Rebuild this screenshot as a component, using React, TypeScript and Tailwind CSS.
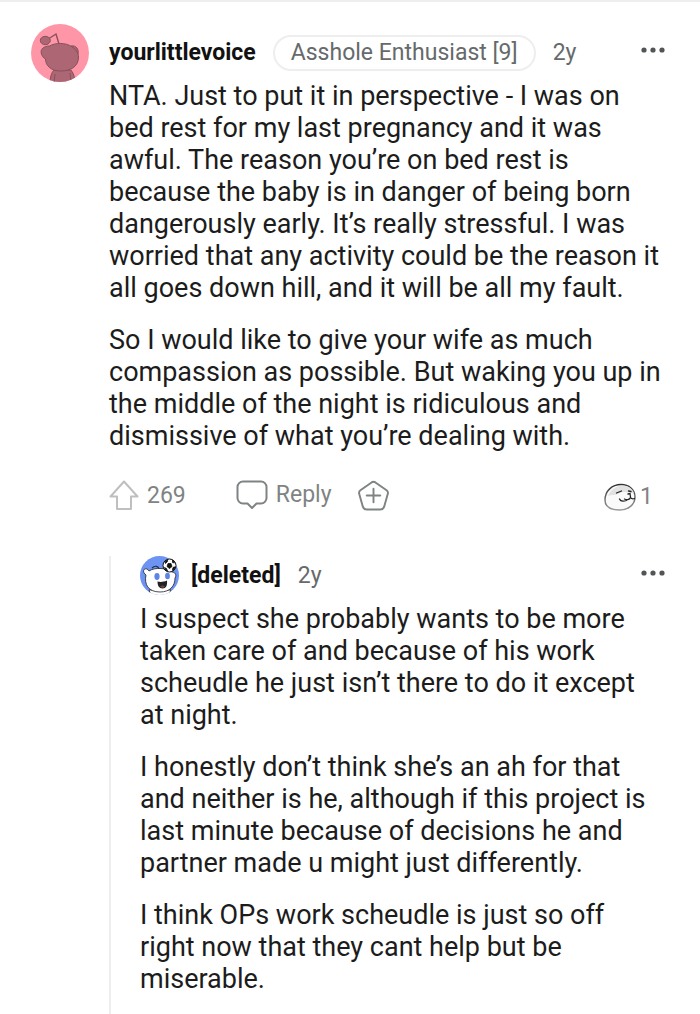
import type { ReactNode } from 'react';

interface CommentHeaderProps {
  avatar: ReactNode;
  author: string;
  flair?: string;
  age: string;
}

function PinkAvatar() {
  return (
    <svg viewBox="0 0 58 58" className="w-full h-full" aria-hidden="true">
      <clipPath id="pink-clip">
        <circle cx="29" cy="29" r="29" />
      </clipPath>
      <g clipPath="url(#pink-clip)">
        <rect width="58" height="58" fill="#ff96a8" />
        <g fill="#ad6673" stroke="#87505c" strokeWidth="1">
          <path d="M19 60c0-6 1-11 4-14h17c3 4 4 8 4 14z" />
          <path d="M24 50l-1 9M39 49l1 9" fill="none" />
          <path d="M18 14.500l7-4.500 3 10" fill="none" strokeWidth="1.400" />
          <ellipse cx="14.300" cy="16.500" rx="5" ry="4.200" />
          <path d="M40 22c5-1 8 3 7 8z" />
          <path d="M10.500 30c-2-5 3-8 8-8 6-3.500 16-3.500 22 .5 4 2.500 7 6 7 10.500 0 9-7 14-18 14-9 0-15-5-15-12-2-1-3.300-3-4-5z" />
        </g>
      </g>
    </svg>
  );
}

function BlueAvatar() {
  return (
    <svg viewBox="0 0 39 39" className="w-full h-full" aria-hidden="true">
      <clipPath id="blue-clip">
        <circle cx="19.500" cy="19.500" r="19.500" />
      </clipPath>
      <g clipPath="url(#blue-clip)">
        <rect width="39" height="39" fill="#6d93f3" />
        <path d="M19 14c0-4-4-5-7-2" fill="none" stroke="#22304f" strokeWidth="1.200" />
        <path d="M9 34l2 6h17l3-6z" fill="#fff" stroke="#222" strokeWidth=".8" />
        <path
          d="M9 15c-2-4-7-2-5 2l2 2c-2 9 2 17 14 17 10 0 15-6 15-14 2-3 0-6-3-6-5-4-17-5-23-1z"
          fill="#fff"
          stroke="#222"
          strokeWidth=".8"
        />
        <ellipse cx="17" cy="20.500" rx="2.600" ry="3.400" fill="#5e83e8" />
        <ellipse cx="27.500" cy="20" rx="2.400" ry="3.200" fill="#5e83e8" />
        <path d="M17.500 25.500c3 .8 6 .5 9.500-1 .5 5-1 8-4.500 8s-5-3-5-7z" fill="#222" />
        <path d="M20 30.500c2-1.500 4-1 5 .3-1 1.300-3.500 1.300-5-.3z" fill="#6e4444" />
      </g>
      <circle cx="29.500" cy="9.500" r="6.500" fill="#fff" stroke="#111" />
      <path
        d="M28 7.500h3l1 3-2.500 2-2.500-2zM25 6l2.500-2.500v2l-2 2zM32.500 4l2 3-2-.5zM33.500 11h2l-2.500 4-.5-2zM24.500 11.500l2 1 1 2.500-2-1z"
        fill="#111"
        stroke="#111"
        strokeWidth=".8"
      />
    </svg>
  );
}

function SealAward() {
  return (
    <svg viewBox="0 0 32 28" className="w-8 h-7 shrink-0" aria-hidden="true">
      <linearGradient id="seal-line" x1="0" y1="0" x2="0" y2="1">
        <stop offset="0" stopColor="#333" />
        <stop offset="1" stopColor="#999" />
      </linearGradient>
      <path
        d="M1 17C1 8 8 1.500 17 1.500c8 0 14 5 14 12.500 0 7-6 13-15 13C7 27 1 24 1 17z"
        fill="#fafafa"
        stroke="url(#seal-line)"
        strokeWidth="1.400"
      />
      <path d="M4 13C7 6 13 2.500 19 2.500c6 0 10 4 11 8-5-1-11-3-15 0-3 2-7 1-11 2.500z" fill="#e2e2e2" />
      <path
        d="M12.500 10l5-2M24.500 8l2.500.5M24 11l2-.5.500 3.500M26.500 14.500c-1 2.500-4 2.500-6 1.500M26.500 14.500c1 1.500 2.500 1.500 4 1M15.500 16c1 2.500 4 2.500 7 1.500"
        fill="none"
        stroke="#222"
        strokeWidth="1.300"
        strokeLinecap="round"
      />
    </svg>
  );
}

function UpvoteIcon() {
  return (
    <svg viewBox="0 0 30 30" className="w-[30px] h-[30px]" fill="none" stroke="#bdbfc0" strokeWidth="2" strokeLinejoin="round" aria-hidden="true">
      <path d="M15 1.500l13.500 15H22V29H8V16.500H1.500z" />
    </svg>
  );
}

function ReplyIcon() {
  return (
    <svg viewBox="0 0 32 30" className="w-8 h-[30px]" fill="none" stroke="#7f8384" strokeWidth="2" strokeLinejoin="round" aria-hidden="true">
      <path d="M7 1.500h18a5.500 5.500 0 0 1 5.500 5.500v11a5.500 5.500 0 0 1-5.500 5.500h-4.500L16 28l-4.500-4.500H7A5.500 5.500 0 0 1 1.500 18V7A5.500 5.500 0 0 1 7 1.500z" />
    </svg>
  );
}

function AwardIcon() {
  return (
    <svg viewBox="0 0 32 32" className="w-[31px] h-[31px]" fill="none" stroke="#7f8384" strokeWidth="2" strokeLinejoin="round" strokeLinecap="round" aria-hidden="true">
      <path d="M14 2.500q2-1.300 4 0l11.500 8q2 1.500 1.200 4L27 27.500Q26 30.500 23 30.500H9q-3 0-4-3L1.300 14.500q-.8-2.500 1.200-4z" />
      <path d="M16 9v14M9 16h14" />
    </svg>
  );
}

function MoreButton() {
  return (
    <button type="button" aria-label="More options" className="ml-auto mb-1.5 shrink-0">
      <svg viewBox="0 0 24 6" className="w-6 h-1.5" fill="#525556" aria-hidden="true">
        <circle cx="3" cy="3" r="2.600" />
        <circle cx="12" cy="3" r="2.600" />
        <circle cx="21" cy="3" r="2.600" />
      </svg>
    </button>
  );
}

function CommentHeader({ avatar, author, flair, age }: CommentHeaderProps) {
  return (
    <header className="flex items-center text-[23px] leading-7 text-[#666a6b]">
      {avatar}
      <a href="#" className="font-bold text-[#111]">
        {author}
      </a>
      {flair && (
        <span className="ml-[17px] px-4 h-9 flex items-center rounded-full border-2 border-[#eeeeee]">
          {flair}
        </span>
      )}
      <time className="ml-[17px]">{age}</time>
      <MoreButton />
    </header>
  );
}

function CommentBody({ paragraphs }: { paragraphs: string[] }) {
  return (
    <div className="flex flex-col gap-5 text-[27px] leading-8 text-[#1c1c1c]">
      {paragraphs.map((text) => (
        <p key={text}>{text}</p>
      ))}
    </div>
  );
}

export default function App() {
  return (
    <main className="min-h-screen flex flex-col bg-white border-t-2 border-[#eeeeee] pl-[31px] font-['Roboto','Liberation_Sans',sans-serif]">
      <article>
        <div className="pt-[22px] pr-[35px]">
          <CommentHeader
            avatar={
              <div className="w-[58px] h-[58px] mr-5 shrink-0">
                <PinkAvatar />
              </div>
            }
            author="yourlittlevoice"
            flair="Asshole Enthusiast [9]"
            age="2y"
          />
        </div>
        <div className="-mt-0.5 pl-[78px] pr-[38px]">
          <CommentBody
            paragraphs={[
              'NTA. Just to put it in perspective - I was on bed rest for my last pregnancy and it was awful. The reason you’re on bed rest is because the baby is in danger of being born dangerously early. It’s really stressful. I was worried that any activity could be the reason it all goes down hill, and it will be all my fault.',
              'So I would like to give your wife as much compassion as possible. But waking you up in the middle of the night is ridiculous and dismissive of what you’re dealing with.',
            ]}
          />
        </div>
        <footer className="mt-[25px] pl-[78px] pr-[47px] flex items-center text-[23px] leading-8 text-[#7f8384]">
          <button type="button" aria-label="Upvote">
            <UpvoteIcon />
          </button>
          <span className="mt-0.5 ml-2">269</span>
          <button type="button" className="ml-[50px] flex items-center gap-2">
            <ReplyIcon />
            Reply
          </button>
          <button type="button" aria-label="Give award" className="ml-[26px]">
            <AwardIcon />
          </button>
          <span className="mt-1 ml-auto flex items-center gap-1">
            <SealAward />1
          </span>
        </footer>
      </article>

      <article className="grow mt-[43px] ml-[78px] pl-[29px] border-l-2 border-[#eeeeee]">
        <div className="pr-[35px]">
          <CommentHeader
            avatar={
              <div className="w-[39px] h-[39px] mr-3 shrink-0">
                <BlueAvatar />
              </div>
            }
            author="[deleted]"
            age="2y"
          />
        </div>
        <div className="mt-2 pr-[38px]">
          <CommentBody
            paragraphs={[
              'I suspect she probably wants to be more taken care of and because of his work scheudle he just isn’t there to do it except at night.',
              'I honestly don’t think she’s an ah for that and neither is he, although if this project is last minute because of decisions he and partner made u might just differently.',
              'I think OPs work scheudle is just so off right now that they cant help but be miserable.',
            ]}
          />
        </div>
      </article>
    </main>
  );
}
